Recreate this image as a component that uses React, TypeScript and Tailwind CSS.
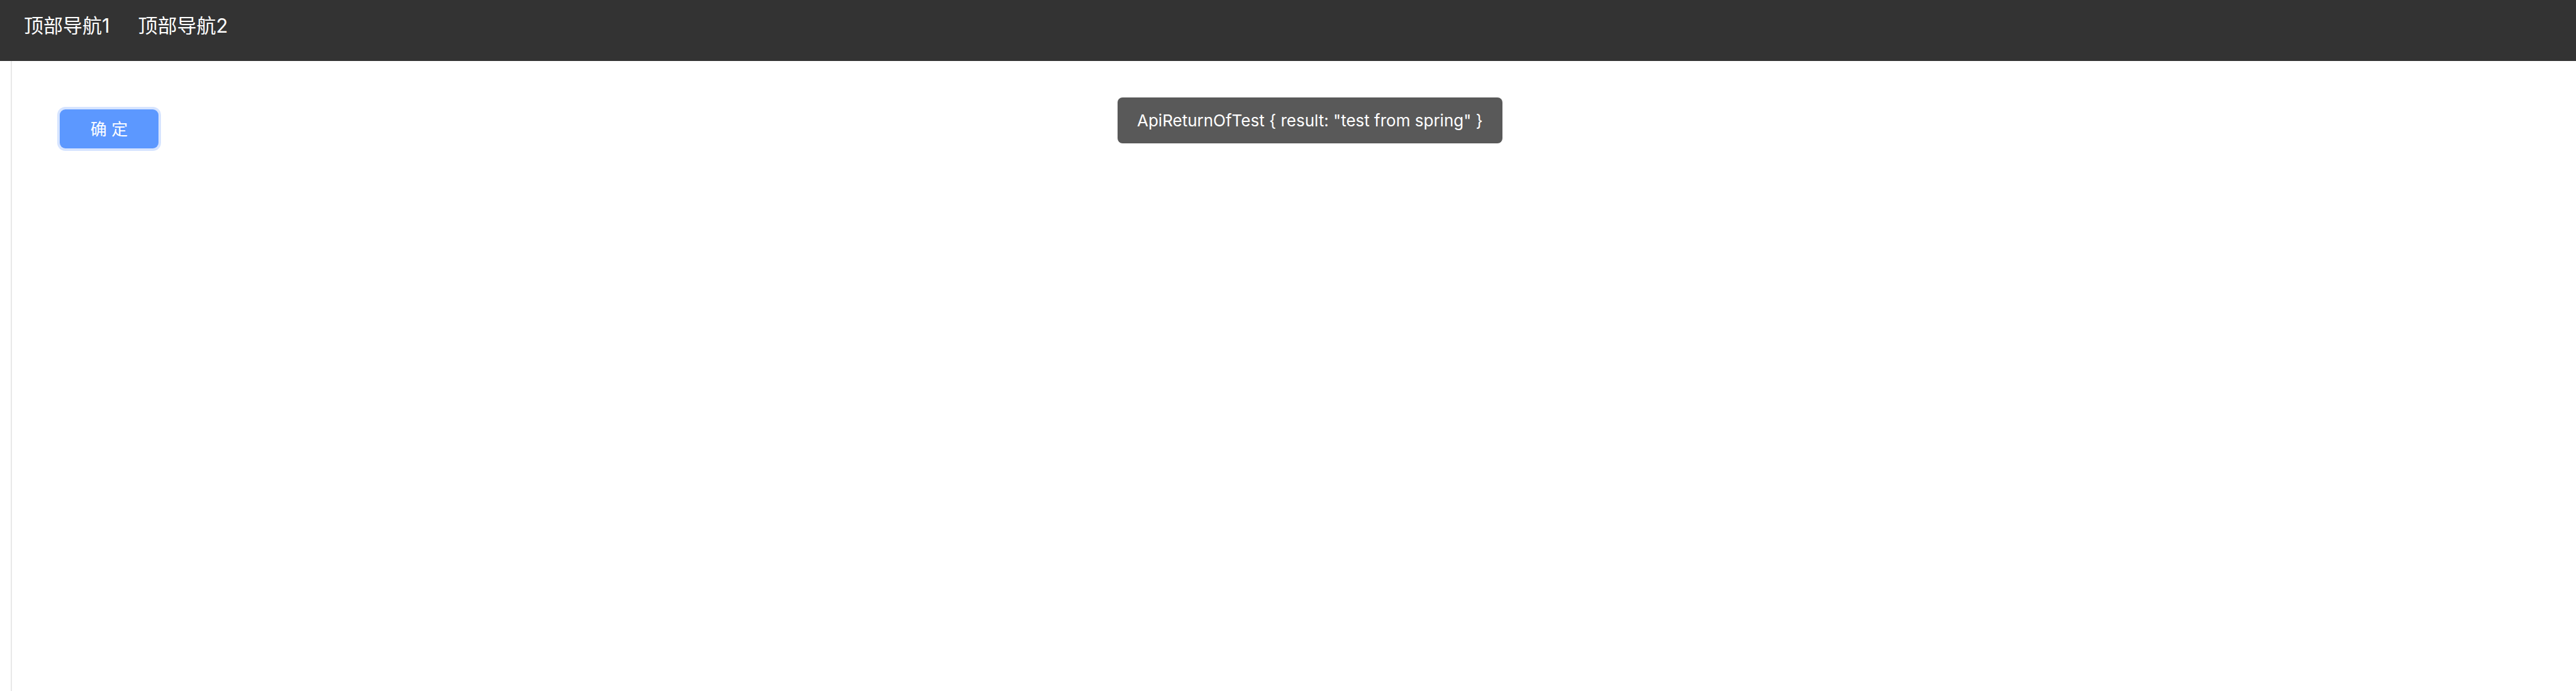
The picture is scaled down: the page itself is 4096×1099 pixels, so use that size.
// Watermarks repeat on a lattice that is turned together with the text.
const ORIGIN = { x: 507, y: 161 };
const ALONG = { x: 765, y: -278 };
const DOWN = { x: 215, y: 590 };

const marks: { x: number; y: number }[] = [];
for (let row = -1; row <= 5; row++) {
  for (let col = -2; col <= 6; col++) {
    const x = ORIGIN.x + col * ALONG.x + row * DOWN.x;
    const y = ORIGIN.y + col * ALONG.y + row * DOWN.y;
    if (x > -140 && x < 4240 && y > -80 && y < 1180) marks.push({ x, y });
  }
}

function Watermark() {
  return (
    <div aria-hidden="true" className="pointer-events-none absolute inset-0 overflow-hidden">
      {marks.map((m) => (
        <span
          key={`${m.x},${m.y}`}
          className="absolute -translate-x-1/2 -translate-y-1/2 -rotate-20 font-['Liberation_Sans',sans-serif] text-[46px] leading-none whitespace-nowrap text-black/[0.01] select-none"
          style={{ left: m.x, top: m.y }}
        >
          PC-018616
        </span>
      ))}
    </div>
  );
}

export default function App() {
  return (
    <div className="relative flex min-h-screen flex-col overflow-hidden bg-white font-[Inter,'Noto_Sans_CJK_SC',sans-serif]">
      <header className="flex h-[97px] items-start bg-[#333333] px-[38px] pt-[18px]">
        <nav className="flex gap-[45px] text-[31px] leading-[46px] text-white">
          <a href="#nav1">顶部导航1</a>
          <a href="#nav2">顶部导航2</a>
        </nav>
      </header>
      <main className="ml-[17px] flex flex-1 items-start border-l-2 border-[#e8e8e8] px-[76px] pt-[77px]">
        <button
          type="button"
          className="flex h-[62px] w-[157px] items-center justify-center rounded-[9px] bg-[#5c98ff] text-[26px] text-white ring-4 ring-[#d6e4ff]"
        >
          确 定
        </button>
      </main>
      <Watermark />
      <div
        role="status"
        className="absolute top-[155px] left-[1777px] flex h-[73px] items-center rounded-[8px] bg-[#595959] px-[31px] text-[26px] whitespace-nowrap text-white"
      >
        {'ApiReturnOfTest { result: "test from spring" }'}
      </div>
    </div>
  );
}
